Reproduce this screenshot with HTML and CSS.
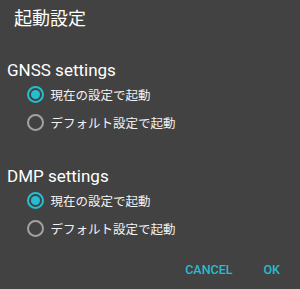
FILE: index.html
```html
<!DOCTYPE html>
<html lang="ja">
<head>
<meta charset="utf-8">
<link rel="stylesheet" href="styles.css">
</head>
<body>
<div class="dialog">
  <div class="title">起動設定</div>
  <div class="section">
    <div class="heading">GNSS settings</div>
    <div class="option"><span class="radio checked"></span><span class="label">現在の設定で起動</span></div>
    <div class="option"><span class="radio"></span><span class="label">デフォルト設定で起動</span></div>
  </div>
  <div class="section second">
    <div class="heading">DMP settings</div>
    <div class="option"><span class="radio checked"></span><span class="label">現在の設定で起動</span></div>
    <div class="option"><span class="radio"></span><span class="label">デフォルト設定で起動</span></div>
  </div>
  <div class="actions">
    <span class="btn">CANCEL</span>
    <span class="btn">OK</span>
  </div>
</div>
</body>
</html>
```

FILE: styles.css
```css
html, body {
  margin: 0;
  padding: 0;
  background: #424242;
}
body {
  width: 300px;
  height: 289px;
  overflow: hidden;
  font-family: Roboto, "Noto Sans CJK JP", sans-serif;
  color: #ffffff;
}
.dialog {
  display: flex;
  flex-direction: column;
}
.title {
  font-family: "Noto Sans CJK JP", sans-serif;
  font-size: 18px;
  line-height: 24px;
  margin-top: 5px;
  padding-left: 14px;
}
.section {
  display: flex;
  flex-direction: column;
  margin-top: 31px;
}
.section.second {
  margin-top: 30px;
}
.heading {
  font-size: 17px;
  line-height: 20px;
  padding-left: 7px;
}
.option {
  display: flex;
  align-items: center;
  height: 28px;
  padding-left: 27px;
}
.radio {
  box-sizing: border-box;
  width: 17px;
  height: 17px;
  border: 2px solid #a3a3a3;
  border-radius: 50%;
  display: flex;
  align-items: center;
  justify-content: center;
  flex: none;
}
.radio.checked {
  border-color: #26bdd1;
}
.radio.checked::after {
  content: "";
  width: 9px;
  height: 9px;
  border-radius: 50%;
  background: #26bdd1;
}
.label {
  font-family: "Noto Sans CJK JP", sans-serif;
  font-size: 12.5px;
  margin-left: 6.5px;
  color: #f2f2f2;
}
.actions {
  display: flex;
  justify-content: flex-end;
  gap: 31px;
  margin-top: 20px;
  padding-right: 20px;
}
.btn {
  font-size: 12.5px;
  line-height: 16px;
  font-weight: 500;
  color: #26bdd1;
}
```
